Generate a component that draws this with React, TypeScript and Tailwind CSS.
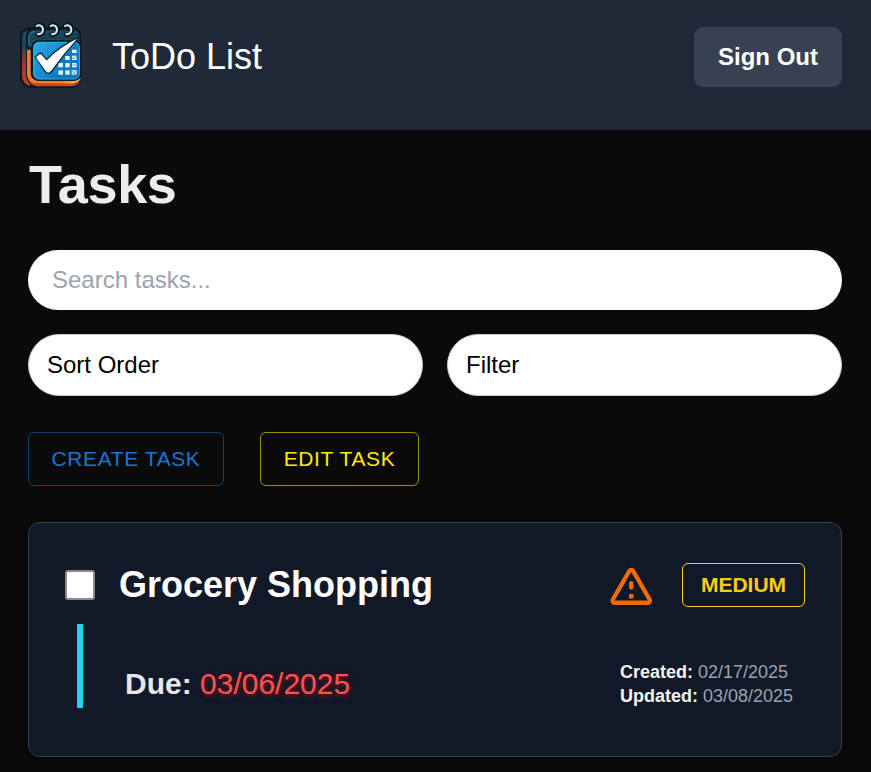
import React from "react";

type Task = {
  id: string;
  title: string;
  priority: string;
  due: string;
  created: string;
  updated: string;
};

const tasks: Task[] = [
  {
    id: "1",
    title: "Grocery Shopping",
    priority: "MEDIUM",
    due: "03/06/2025",
    created: "02/17/2025",
    updated: "03/08/2025",
  },
];

const Logo = () => (
  <svg width="70" height="70" viewBox="24 24 210 210" fill="none">
    <defs>
      <linearGradient id="page" x1="70" y1="95" x2="210" y2="215" gradientUnits="userSpaceOnUse">
        <stop offset="0" stopColor="#25b0e4" />
        <stop offset="0.5" stopColor="#1387cf" />
        <stop offset="1" stopColor="#0b5da8" />
      </linearGradient>
      <linearGradient id="side" x1="0" y1="60" x2="0" y2="230" gradientUnits="userSpaceOnUse">
        <stop offset="0" stopColor="#15506e" />
        <stop offset="0.3" stopColor="#1d4458" />
        <stop offset="0.45" stopColor="#8a3524" />
        <stop offset="1" stopColor="#c9431f" />
      </linearGradient>
      <linearGradient id="edge" x1="50" y1="0" x2="214" y2="0" gradientUnits="userSpaceOnUse">
        <stop offset="0" stopColor="#ef7a35" />
        <stop offset="0.6" stopColor="#f47b28" />
        <stop offset="1" stopColor="#ffc04a" />
      </linearGradient>
    </defs>
    {/* stacked back pages */}
    <path d="M56 52H192Q214 54 214 84V204Q210 232 188 234H64Q32 232 30 204V84Q32 57 56 52Z" fill="#0a1825" />
    <path d="M52 60Q37 63 36 84V198Q38 222 62 229L50 206V76Z" fill="url(#side)" />
    <path d="M50 194Q54 226 80 229H184Q202 228 208 216L196 221H74Q54 214 50 194Z" fill="#c9431f" />
    <path d="M48 70Q55 57 68 57H194Q211 59 212 84V198Q212 216 192 221H76Q51 217 48 196Z" fill="#0b1b29" />
    <path d="M51 119V194Q53 217 76 221H190Q208 218 213 203Q204 212 190 212H82Q62 208 62 190V119Z" fill="url(#edge)" />
    {/* binding */}
    <path d="M54 106V79Q56 62 73 61H190Q207 62 208 81V111H54Z" fill="#1d4a60" />
    <path d="M62 74H204M58 84H206" stroke="#123749" strokeWidth="3" />
    <path d="M56 106V84Q59 67 75 64" stroke="#2f6c86" strokeWidth="4" />
    {/* front page */}
    <rect x="65" y="91" width="147" height="121" rx="19" fill="#061725" />
    <rect x="71" y="97" width="137" height="110" rx="15" fill="url(#page)" stroke="#38bdeb" strokeWidth="3" />
    <path d="M114 99V206" stroke="#0b6fb6" strokeWidth="1.5" opacity="0.6" />
    <path d="M144 172L181 119L204 104V197Q199 205 187 205H144Z" fill="#0b79c6" />
    <g fill="#e6f5fc">
      <rect x="186" y="119" width="14" height="10" />
      <rect x="166" y="138" width="13" height="12" />
      <rect x="186" y="137" width="14" height="13" />
      <rect x="145" y="159" width="14" height="13" />
      <rect x="166" y="159" width="13" height="13" />
      <rect x="186" y="159" width="14" height="13" />
      <rect x="145" y="181" width="14" height="13" />
      <rect x="166" y="181" width="13" height="13" />
      <rect x="185" y="180" width="15" height="14" />
    </g>
    <path d="M187 140L192 147L203 134M188 162L193 168L204 155M186 183L199 193M187 192L203 177" stroke="#3f789a" strokeWidth="2" />
    {/* check mark */}
    <path
      d="M76 141L89 130Q95 129 99 136L110 149Q147 109 209 80Q166 127 126 183Q115 197 105 184Z"
      fill="#fff"
      stroke="#0a2436"
      strokeWidth="4"
      strokeLinejoin="round"
    />
    <path d="M80 145L107 181Q114 188 121 180Q157 131 190 98" stroke="#d3dbe1" strokeWidth="2" />
    {/* rings */}
    {[91, 133, 176].map((x) => (
      <g key={x}>
        <path
          d={`M${x - 12} 48Q${x - 2} 41 ${x + 6} 48Q${x + 14} 60 ${x + 6} 70Q${x} 76 ${x - 8} 74`}
          stroke="#07131f"
          strokeWidth="13"
          strokeLinecap="round"
        />
        <path
          d={`M${x - 11} 48Q${x - 2} 43 ${x + 5} 50Q${x + 11} 59 ${x + 5} 68Q${x + 1} 73 ${x - 7} 73`}
          stroke="#e4ebee"
          strokeWidth="6"
          strokeLinecap="round"
        />
      </g>
    ))}
  </svg>
);

const WarningIcon = () => (
  <svg width="52.5" height="52.5" viewBox="0 0 24 24" fill="#ef6c00">
    <path d="M12 5.99 19.53 19H4.47L12 5.99M2.74 18c-.77 1.33.19 3 1.73 3h15.06c1.54 0 2.5-1.67 1.73-3L13.73 4.99c-.77-1.33-2.69-1.33-3.46 0L2.74 18zM11 11v2c0 .55.45 1 1 1s1-.45 1-1v-2c0-.55-.45-1-1-1s-1 .45-1 1zm0 5h2v2h-2z" />
  </svg>
);

const Header = () => (
  <header className="flex h-[130px] items-start bg-[#1f2937] pl-[18px] pr-[29px]">
    <div className="mt-[18px]">
      <Logo />
    </div>
    <h1 className="ml-6 mt-9 text-[36px] leading-[42px] text-white">ToDo List</h1>
    <button className="ml-auto mt-[27px] h-[60px] w-[148px] rounded-[9px] bg-[#374151] text-2xl font-bold text-white">
      Sign Out
    </button>
  </header>
);

const TaskCard = ({ task }: { task: Task }) => (
  <article className="mt-9 h-[235px] rounded-xl border border-[#374151] bg-[#111827] p-9 shadow-lg">
    <div className="flex h-[52px] items-center">
      <input
        type="checkbox"
        className="size-[30px] shrink-0 appearance-none rounded-[3px] border-2 border-[#8a8a8a] bg-white"
      />
      <h3 className="ml-6 text-[36px] font-bold leading-[42px] text-white">{task.title}</h3>
      <div className="ml-auto">
        <WarningIcon />
      </div>
      <span className="ml-[25px] flex h-11 w-[123px] items-center justify-center rounded-md border border-[#facc15] text-[21px] font-bold text-[#facc15]">
        {task.priority}
      </span>
    </div>
    <div className="ml-3 mt-[13px] flex h-[84px] border-l-6 border-[#22d3ee] pl-[42px] pt-9">
      <p className="h-12 text-[30px] leading-[48px] text-[#ff5252]">
        <span className="font-bold text-[#e5e7eb]">Due:</span>{" "}
        <span className="[text-shadow:1px_2px_4px_rgba(255,0,0,0.5)]">{task.due}</span>
      </p>
      <div className="ml-auto w-[185px] text-lg leading-6 text-[#9ca3af]">
        <p>
          <span className="font-bold text-[#f3f4f6]">Created:</span> {task.created}
        </p>
        <p>
          <span className="font-bold text-[#f3f4f6]">Updated:</span> {task.updated}
        </p>
      </div>
    </div>
  </article>
);

const App = () => {
  return (
    <div className="h-screen overflow-hidden bg-[#0a0a0a] font-['Liberation_Sans',Arial,sans-serif]">
      <Header />
      <main className="pl-7 pr-[29px] pt-6">
        <h2 className="h-[60px] pl-px text-[54px] font-bold leading-[60px] tracking-[-0.3px] text-[#ededed]">
          Tasks
        </h2>
        <input
          type="text"
          placeholder="Search tasks..."
          className="mt-9 block h-[60px] w-full rounded-full bg-white px-6 text-2xl text-black placeholder:text-[#9ca3af]"
        />
        <div className="mt-6 grid grid-cols-2 gap-6 text-2xl text-black">
          <button className="h-[62px] rounded-full border border-[#cccccc] bg-white px-[18px] text-left">
            Sort Order
          </button>
          <button className="h-[62px] rounded-full border border-[#cccccc] bg-white px-[18px] text-left">
            Filter
          </button>
        </div>
        <div className="mt-9 flex gap-9 text-[21px] tracking-[0.6px]">
          <button className="h-[54px] w-[196px] rounded-md border border-[#1976d2]/50 text-[#1976d2]">
            CREATE TASK
          </button>
          <button className="h-[54px] w-[159px] rounded-md border border-[#ffea00]/60 text-[#ffea00]">
            EDIT TASK
          </button>
        </div>
        {tasks.map((task) => (
          <TaskCard key={task.id} task={task} />
        ))}
      </main>
    </div>
  );
};

export default App;
